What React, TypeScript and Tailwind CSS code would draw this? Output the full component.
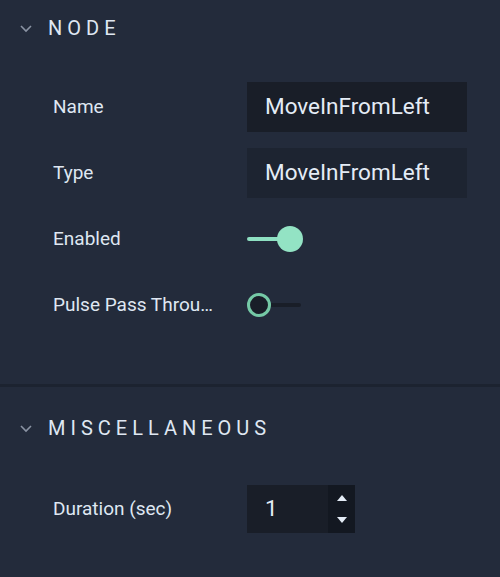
import React from "react";

const Chevron = () => (
  <svg width="14" height="10" viewBox="0 0 14 10" className="shrink-0">
    <path d="M2 3 L7 8 L12 3" fill="none" stroke="#8a93a3" strokeWidth="1.6" />
  </svg>
);

const SectionHeader = ({ title }: { title: string }) => (
  <div className="flex items-center h-14 pl-[19px]">
    <Chevron />
    <span className="ml-[15px] text-[20px] tracking-[5px] text-[#dfe7f2]">{title}</span>
  </div>
);

const Row = ({ label, children }: { label: string; children: React.ReactNode }) => (
  <div className="flex items-center h-[50px]">
    <div className="w-[247px] shrink-0 pl-[53px] pr-[29px] text-[19px] text-[#dfe7f2] truncate">
      {label}
    </div>
    {children}
  </div>
);

const TextField = ({ value, dim }: { value: string; dim?: boolean }) => (
  <div
    className={`w-[220px] h-[50px] flex items-center pl-[18px] text-[22.5px] text-[#e4ecf6] ${
      dim ? "bg-[#1d2431]" : "bg-[#191e28]"
    }`}
  >
    {value}
  </div>
);

const App = () => {
  return (
    <div className="w-[500px] h-[577px] bg-[#232b3b] font-['Roboto',sans-serif] overflow-hidden">
      <SectionHeader title="NODE" />
      <div className="flex flex-col gap-4 mt-[26px]">
        <Row label="Name">
          <TextField value="MoveInFromLeft" />
        </Row>
        <Row label="Type">
          <TextField value="MoveInFromLeft" dim />
        </Row>
        <Row label="Enabled">
          <div className="relative w-[56px] h-[26px] flex items-center">
            <div className="h-[4px] w-[44px] rounded-full bg-[#8ee0c2]" />
            <div className="absolute left-[30px] top-0 w-[26px] h-[26px] rounded-full bg-[#93e3c4]" />
          </div>
        </Row>
        <Row label="Pulse Pass Through">
          <div className="relative w-[56px] h-[26px] flex items-center">
            <div className="ml-[20px] h-[4px] w-[34px] rounded-full bg-[#191e28]" />
            <div className="absolute left-0 top-[1px] w-[24px] h-[24px] rounded-full bg-[#191e28] border-[3px] border-[#75c9a6]" />
          </div>
        </Row>
      </div>
      <div className="mt-[54px] h-[3px] bg-[#1c2330]" />
      <div className="mt-[13px]">
        <SectionHeader title="MISCELLANEOUS" />
      </div>
      <div className="mt-[28px]">
        <Row label="Duration (sec)">
          <div className="flex h-[48px] w-[108px] bg-[#191e28]">
            <div className="flex-1 flex items-center pl-[18px] text-[22.5px] text-[#e4ecf6]">1</div>
            <div className="w-[27px] bg-[#131821] flex flex-col items-center justify-center gap-[16px]">
              <svg width="10" height="6" viewBox="0 0 10 6">
                <path d="M0 6 L5 0 L10 6 Z" fill="#e4ecf6" />
              </svg>
              <svg width="10" height="6" viewBox="0 0 10 6">
                <path d="M0 0 L5 6 L10 0 Z" fill="#e4ecf6" />
              </svg>
            </div>
          </div>
        </Row>
      </div>
    </div>
  );
};

export default App;
